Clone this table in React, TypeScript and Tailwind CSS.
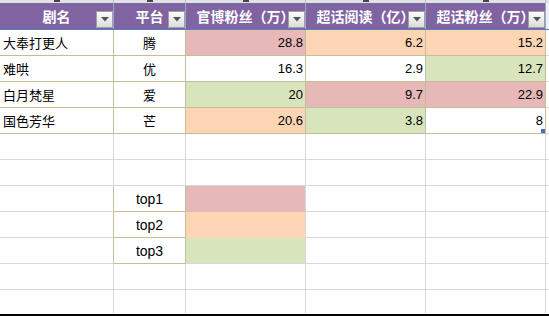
import React from "react";

const TAN = "#c4bd97";
const GRID = "#d9d9d9";
const PINK = "#e6b8b7";
const PEACH = "#fcd5b4";
const GREEN = "#d8e4bc";

const cols = "grid grid-cols-[114px_72px_120px_120px_120px_1fr]";
const cjk = { fontFamily: '"Noto Sans CJK SC", "Noto Sans", sans-serif' };
const num = { fontFamily: '"Liberation Sans", Arial, sans-serif' };

function FilterButton() {
  return (
    <div className="absolute right-0 bottom-[1px] w-[17px] h-[17px] border border-[#a0a0a0] bg-gradient-to-b from-[#fbfbfb] to-[#dcdcdc] flex items-center justify-center">
      <svg width="8" height="5" viewBox="0 0 8 5">
        <polygon points="0,0 8,0 4,4.5" fill="#555" />
      </svg>
    </div>
  );
}

function HeaderCell({ label, last }: { label: string; last?: boolean }) {
  const chars = Array.from(label);
  return (
    <div
      className={`relative h-[26px] bg-[#8064a2] flex items-center justify-center text-white font-bold text-[14px] leading-none ${
        last ? "" : "border-r border-[#98a6cf]"
      }`}
      style={cjk}
    >
      <span className="flex whitespace-nowrap">
        {chars.map((ch, i) => (
          <span
            key={i}
            className={`inline-block w-[14px] ${
              ch === "（" ? "text-right" : ch === "）" ? "text-left" : "text-center"
            }`}
          >
            {ch}
          </span>
        ))}
      </span>
      <FilterButton />
    </div>
  );
}

type CellProps = {
  children?: React.ReactNode;
  bg?: string;
  align?: "left" | "center" | "right";
  rb?: string;
  bb?: string;
  font?: "cjk" | "num";
  size?: string;
  extra?: React.ReactNode;
};

function Cell({ children, bg = "#ffffff", align = "left", rb = GRID, bb = GRID, font = "num", size = "13px", extra }: CellProps) {
  const justify = align === "left" ? "justify-start pl-[3px]" : align === "center" ? "justify-center" : "justify-end pr-[2px]";
  return (
    <div
      className={`relative h-full flex items-center ${justify} leading-none text-black`}
      style={{
        backgroundColor: bg,
        borderRight: rb === "none" ? undefined : `1px solid ${rb}`,
        borderBottom: `1px solid ${bb}`,
        fontSize: size,
        ...(font === "cjk" ? cjk : num),
      }}
    >
      {children}
      {extra}
    </div>
  );
}

const data = [
  { name: "大奉打更人", p: "腾", c: ["28.8", PINK], d: ["6.2", PEACH], e: ["15.2", PEACH] },
  { name: "难哄", p: "优", c: ["16.3", "#ffffff"], d: ["2.9", "#ffffff"], e: ["12.7", GREEN] },
  { name: "白月梵星", p: "爱", c: ["20", GREEN], d: ["9.7", PINK], e: ["22.9", PINK] },
  { name: "国色芳华", p: "芒", c: ["20.6", PEACH], d: ["3.8", GREEN], e: ["8", "#ffffff"] },
];

const tops = [
  ["top1", PINK],
  ["top2", PEACH],
  ["top3", GREEN],
];

export default function App() {
  return (
    <div className="w-[549px] h-[316px] overflow-hidden bg-white select-none">
      {/* column header remnant */}
      <div className={`${cols} h-[3px] bg-[#dfe2e6]`}>
        {[0, 1, 2, 3, 4].map((i) => (
          <div key={i} className="h-full border-r border-[#b9bdc3] flex justify-center">
            <div className="w-[6px] h-[2px] bg-[#444]" />
          </div>
        ))}
        <div className="h-full" />
      </div>

      {/* table header */}
      <div className={`${cols} h-[27px] border-b border-[#4f81bd]`}>
        <HeaderCell label="剧名" />
        <HeaderCell label="平台" />
        <HeaderCell label="官博粉丝（万）" />
        <HeaderCell label="超话阅读（亿）" />
        <HeaderCell label="超话粉丝（万）" />
        <div className="h-[26px] bg-[#eef0f4]" />
      </div>

      {/* data rows */}
      {data.map((r, i) => (
        <div key={i} className={`${cols} h-[26px]`}>
          <Cell font="cjk" rb={TAN} bb={TAN}>{r.name}</Cell>
          <Cell font="cjk" align="center" rb={TAN} bb={TAN}>{r.p}</Cell>
          <Cell align="right" bg={r.c[1]} rb={TAN} bb={TAN}>{r.c[0]}</Cell>
          <Cell align="right" bg={r.d[1]} rb={TAN} bb={TAN}>{r.d[0]}</Cell>
          <Cell
            align="right"
            bg={r.e[1]}
            rb={TAN}
            bb={TAN}
            extra={i === 3 ? <div className="absolute right-0 bottom-0 w-[4px] h-[4px] bg-[#4a6cc4]" /> : null}
          >
            {r.e[0]}
          </Cell>
          <Cell rb="none" bb={GRID} />
        </div>
      ))}

      {/* empty rows + legend */}
      <div className="border-l border-[#aeb2b8]">
        {[0, 1].map((i) => (
          <div key={`e${i}`} className={`${cols} h-[26px] -ml-px`}>
            <Cell /><Cell /><Cell /><Cell /><Cell /><Cell rb="none" />
          </div>
        ))}
        {tops.map(([label, color], i) => (
          <div key={label} className={`${cols} h-[26px] -ml-px`}>
            <Cell rb={TAN} bb={GRID} />
            <Cell align="center" size="14px" rb={TAN} bb={TAN}>{label}</Cell>
            <Cell bg={color} bb={i === 2 ? GRID : color} />
            <Cell /><Cell /><Cell rb="none" />
          </div>
        ))}
        <div className={`${cols} h-[26px] -ml-px`}>
          <Cell /><Cell /><Cell /><Cell /><Cell /><Cell rb="none" />
        </div>
        <div className={`${cols} h-[24px] -ml-px`}>
          <Cell bb="transparent" /><Cell bb="transparent" /><Cell bb="transparent" /><Cell bb="transparent" /><Cell bb="transparent" /><Cell rb="none" bb="transparent" />
        </div>
      </div>
      <div className="h-[2px] bg-black" />
    </div>
  );
}
